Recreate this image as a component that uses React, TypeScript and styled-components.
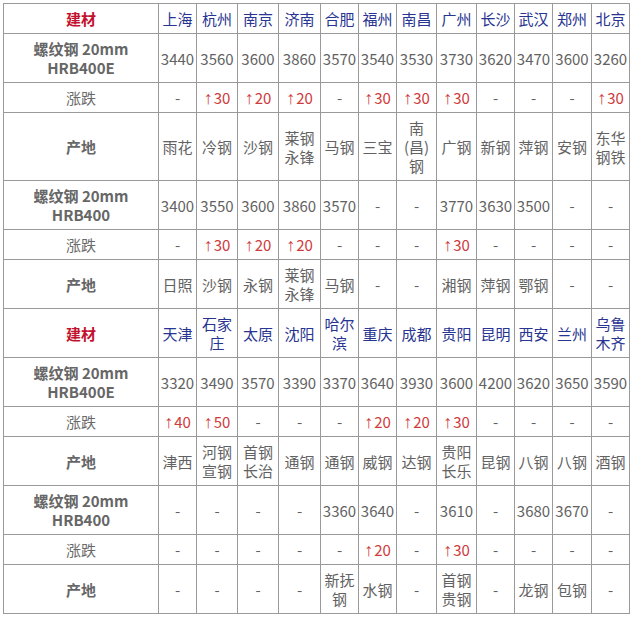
import React from 'react';
import styled, { createGlobalStyle, css } from 'styled-components';

const GlobalStyle = createGlobalStyle`
  html, body {
    margin: 0;
    padding: 0;
    background: #fff;
  }
  body {
    font-family: "Noto Sans CJK SC", "Noto Sans", sans-serif;
  }
`;

const Page = styled.div`
  padding: 3px 0 0 3px;
`;

const Table = styled.table`
  width: 626px;
  table-layout: fixed;
  border-collapse: collapse;
  border: 1px solid #555;
  font-size: 15px;
  line-height: 19px;
  color: #626262;
`;

type Kind = 'material' | 'city' | 'label' | 'change' | 'value' | 'up';

const Cell = styled.td<{ $kind: Kind }>`
  border: 1px solid #9a9a9a;
  padding: 5px 1px;
  text-align: center;
  vertical-align: middle;
  white-space: nowrap;

  ${(p) =>
    p.$kind === 'material' &&
    css`
      color: #c3122f;
      font-weight: 700;
    `}
  ${(p) =>
    p.$kind === 'city' &&
    css`
      color: #283491;
    `}
  ${(p) =>
    p.$kind === 'label' &&
    css`
      color: #666;
      font-weight: 700;
    `}
  ${(p) =>
    p.$kind === 'change' &&
    css`
      color: #6a6a6a;
    `}
  ${(p) =>
    p.$kind === 'up' &&
    css`
      color: #cf3b3b;
    `}
`;

const Arrow = styled.span`
  font-family: "Liberation Sans", sans-serif;
  font-size: 18px;
  line-height: 0;
  margin-right: 1px;
`;

const widths = [155, 38, 41, 41, 42, 38, 38, 40, 40, 38, 38, 39, 38];

type Section = {
  cities: string[];
  e: string[];
  eChange: string[];
  eOrigin: string[];
  p: string[];
  pChange: string[];
  pOrigin: string[];
};

const sections: Section[] = [
  {
    cities: ['上海', '杭州', '南京', '济南', '合肥', '福州', '南昌', '广州', '长沙', '武汉', '郑州', '北京'],
    e: ['3440', '3560', '3600', '3860', '3570', '3540', '3530', '3730', '3620', '3470', '3600', '3260'],
    eChange: ['-', '↑30', '↑20', '↑20', '-', '↑30', '↑30', '↑30', '-', '-', '-', '↑30'],
    eOrigin: ['雨花', '冷钢', '沙钢', '莱钢|永锋', '马钢', '三宝', '南|(昌)|钢', '广钢', '新钢', '萍钢', '安钢', '东华|钢铁'],
    p: ['3400', '3550', '3600', '3860', '3570', '-', '-', '3770', '3630', '3500', '-', '-'],
    pChange: ['-', '↑30', '↑20', '↑20', '-', '-', '-', '↑30', '-', '-', '-', '-'],
    pOrigin: ['日照', '沙钢', '永钢', '莱钢|永锋', '马钢', '-', '-', '湘钢', '萍钢', '鄂钢', '-', '-'],
  },
  {
    cities: ['天津', '石家|庄', '太原', '沈阳', '哈尔|滨', '重庆', '成都', '贵阳', '昆明', '西安', '兰州', '乌鲁|木齐'],
    e: ['3320', '3490', '3570', '3390', '3370', '3640', '3930', '3600', '4200', '3620', '3650', '3590'],
    eChange: ['↑40', '↑50', '-', '-', '-', '↑20', '↑20', '↑30', '-', '-', '-', '-'],
    eOrigin: ['津西', '河钢|宣钢', '首钢|长治', '通钢', '通钢', '威钢', '达钢', '贵阳|长乐', '昆钢', '八钢', '八钢', '酒钢'],
    p: ['-', '-', '-', '-', '3360', '3640', '-', '3610', '-', '3680', '3670', '-'],
    pChange: ['-', '-', '-', '-', '-', '↑20', '-', '↑30', '-', '-', '-', '-'],
    pOrigin: ['-', '-', '-', '-', '新抚|钢', '水钢', '-', '首钢|贵钢', '-', '龙钢', '包钢', '-'],
  },
];

function Lines({ text }: { text: string }) {
  if (text.startsWith('↑')) {
    return (
      <>
        <Arrow>↑</Arrow>
        {text.slice(1)}
      </>
    );
  }
  const parts = text.split('|');
  return (
    <>
      {parts.map((t, i) => (
        <React.Fragment key={i}>
          {i > 0 && <br />}
          {t}
        </React.Fragment>
      ))}
    </>
  );
}

function DataRow({ label, labelKind, values, valueKind }: {
  label: React.ReactNode;
  labelKind: Kind;
  values: string[];
  valueKind?: Kind;
}) {
  return (
    <tr>
      <Cell $kind={labelKind}>{label}</Cell>
      {values.map((v, i) => (
        <Cell key={i} $kind={valueKind ?? (v.startsWith('↑') ? 'up' : 'value')}>
          <Lines text={v} />
        </Cell>
      ))}
    </tr>
  );
}

export default function App() {
  return (
    <Page>
      <GlobalStyle />
      <Table>
        <colgroup>
          {widths.map((w, i) => (
            <col key={i} style={{ width: w }} />
          ))}
        </colgroup>
        <tbody>
          {sections.map((s, si) => (
            <React.Fragment key={si}>
              <DataRow label="建材" labelKind="material" values={s.cities} valueKind="city" />
              <DataRow label={<>螺纹钢 20mm<br />HRB400E</>} labelKind="label" values={s.e} />
              <DataRow label="涨跌" labelKind="change" values={s.eChange} />
              <DataRow label="产地" labelKind="label" values={s.eOrigin} />
              <DataRow label={<>螺纹钢 20mm<br />HRB400</>} labelKind="label" values={s.p} />
              <DataRow label="涨跌" labelKind="change" values={s.pChange} />
              <DataRow label="产地" labelKind="label" values={s.pOrigin} />
            </React.Fragment>
          ))}
        </tbody>
      </Table>
    </Page>
  );
}
